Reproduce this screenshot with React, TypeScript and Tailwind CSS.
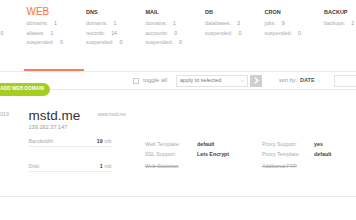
const tabs = [
  { title: 'USER', rows: [['users:', '1'], ['suspended:', '0']] },
  { title: 'WEB', active: true, rows: [['domains:', '1'], ['aliases:', '1'], ['suspended:', '0']] },
  { title: 'DNS', rows: [['domains:', '1'], ['records:', '14'], ['suspended:', '0']] },
  { title: 'MAIL', rows: [['domains:', '1'], ['accounts:', '0'], ['suspended:', '0']] },
  { title: 'DB', rows: [['databases:', '3'], ['suspended:', '0']] },
  { title: 'CRON', rows: [['jobs:', '9'], ['suspended:', '0']] },
  { title: 'BACKUP', rows: [['backups:', '2']] },
];

const webOptions = [
  { label: 'Web Template:', value: 'default' },
  { label: 'SSL Support:', value: 'Lets Encrypt' },
  { label: 'Web Statistics', off: true },
];

const proxyOptions = [
  { label: 'Proxy Support:', value: 'yes' },
  { label: 'Proxy Template:', value: 'default' },
  { label: 'Additional FTP', off: true },
];

function OptionList({ items }: { items: { label: string; value?: string; off?: boolean }[] }) {
  return (
    <div className="text-[5.3px] whitespace-nowrap">
      {items.map(item => (
        <div key={item.label} className={item.off ? 'mt-[3px] flex leading-[9.5px]' : 'flex leading-[9.5px]'}>
          <span className={item.off ? 'text-[#aaa] line-through' : 'w-[52px] shrink-0 text-[#aaa]'}>{item.label}</span>
          {item.value && <span className="font-bold text-[#444]">{item.value}</span>}
        </div>
      ))}
    </div>
  );
}

export default function App() {
  return (
    <div className="w-[356px] h-[220px] overflow-hidden bg-white font-['Liberation_Sans',Arial,sans-serif]">
      {/* Tabs */}
      <div className="h-[72px] border-b border-[#ebebeb]">
        <div className="flex h-[71px] -ml-[35.5px]">
          {tabs.map(tab => (
            <div
              key={tab.title}
              className={tab.active
                ? 'w-[59.5px] h-full shrink-0 pl-[2.5px] border-b-2 border-[#fa7a5e]'
                : 'w-[59.5px] h-full shrink-0 pl-[2.5px]'}
            >
              <div className="h-[16.5px] flex items-end leading-none">
                {tab.active ? (
                  <span className="text-[10px] text-[#ff7034]">{tab.title}</span>
                ) : (
                  <span className="pb-[1.5px] text-[5.5px] font-bold text-[#3a3a3a]">{tab.title}</span>
                )}
              </div>
              <div className="mt-[2.75px] text-[5.3px] whitespace-nowrap">
                {tab.rows.map(([label, value]) => (
                  <div key={label} className="flex leading-[9.5px]">
                    <span className="text-[#aaa]">{label}</span>
                    <span className="ml-[6px] text-[#999]">{value}</span>
                  </div>
                ))}
              </div>
            </div>
          ))}
        </div>
      </div>

      {/* Toolbar */}
      <div className="relative h-[18px] border-b border-[#ebebeb] flex items-center whitespace-nowrap">
        <button className="absolute left-[-20px] top-[11px] h-[13px] w-[70px] rounded-full bg-[#a6ce1f] flex items-center justify-end pr-[6px] text-[4.8px] font-bold leading-none text-white">
          + ADD WEB DOMAIN
        </button>
        <div className="ml-[133px] w-[6px] h-[6px] shrink-0 border border-[#ccc] bg-white" />
        <span className="ml-[4px] shrink-0 text-[6px] text-[#999]">toggle all</span>
        <div className="ml-[9px] w-[72px] h-[12px] shrink-0 border border-[#e2e2e2] flex items-center justify-between px-[3px]">
          <span className="text-[5.5px] text-[#777]">apply to selected</span>
          <svg width="3" height="2" viewBox="0 0 6 4" fill="none" stroke="#bbb" strokeWidth="1.2">
            <polyline points="0.5,0.5 3,3 5.5,0.5" />
          </svg>
        </div>
        <div className="ml-[2px] w-[12px] h-[12px] shrink-0 bg-[#cfcfcf] flex items-center justify-center">
          <svg width="5" height="7" viewBox="0 0 5 7" fill="none" stroke="#fff" strokeWidth="1.4">
            <polyline points="1,0.8 3.8,3.5 1,6.2" />
          </svg>
        </div>
        <span className="ml-[17px] shrink-0 text-[5.5px] text-[#999]">sort by:</span>
        <span className="ml-[3px] shrink-0 text-[5.5px] font-bold text-[#555]">DATE</span>
        <span className="ml-[3px] shrink-0 text-[5.5px] text-[#bbb]">↓</span>
        <div className="ml-[14px] w-[40px] h-[12px] shrink-0 border border-[#e2e2e2] bg-white" />
      </div>

      {/* Domain row */}
      <div className="h-[107px] border-b border-[#ebebeb] flex">
        <div className="w-[9px] shrink-0 flex justify-end pt-[21.5px]">
          <span className="shrink-0 whitespace-nowrap text-[5.3px] leading-none text-[#aaa]">Nov 05, 2019</span>
        </div>
        <div className="ml-[19.5px] pt-[18.5px] whitespace-nowrap">
          <div className="flex items-center">
            <span className="text-[13.5px] leading-none text-[#333]">mstd.me</span>
            <span className="ml-[17.5px] text-[4.5px] leading-none text-[#aaa]">www.mstd.me</span>
          </div>
          <div className="mt-[3px] text-[5.6px] leading-none text-[#999]">139.162.37.147</div>

          <div className="mt-[6.7px] flex items-start">
            <div className="w-[83px] shrink-0 text-[5.3px]">
              <div className="flex justify-between leading-[9px]">
                <span className="text-[#aaa]">Bandwidth</span>
                <span><b className="text-[#444]">19</b> <span className="text-[#aaa]">mb</span></span>
              </div>
              <div className="h-[1px] bg-[#ececec]" />
              <div className="mt-[15px] flex justify-between leading-[9px]">
                <span className="text-[#aaa]">Disk:</span>
                <span><b className="text-[#444]">1</b> <span className="text-[#aaa]">mb</span></span>
              </div>
              <div className="h-[1px] bg-[#ececec]" />
            </div>
            <div className="ml-[33.5px] w-[117px] shrink-0 pt-[2.75px]">
              <OptionList items={webOptions} />
            </div>
            <div className="shrink-0 pt-[2.75px]">
              <OptionList items={proxyOptions} />
            </div>
          </div>
        </div>
      </div>
    </div>
  );
}
